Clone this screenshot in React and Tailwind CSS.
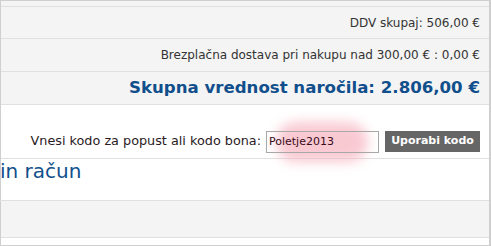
export default function App() {
  const font = { fontFamily: '"DejaVu Sans", Verdana, sans-serif' };
  return (
    <div className="w-[491px] h-[246px] bg-white overflow-hidden relative" style={font}>
      <div className="h-full border-l border-r-2 border-t border-b border-[#cfcfcf] flex flex-col">
        <div className="h-[6px] bg-[#f4f4f4] border-b border-[#e0e0e0]"></div>
        <div className="h-[32px] bg-[#f4f4f4] border-b border-[#e0e0e0] flex items-center justify-end pr-[9px] text-[12px] text-[#333]">
          DDV skupaj: 506,00 €
        </div>
        <div className="h-[33px] bg-[#f4f4f4] border-b border-[#e0e0e0] flex items-center justify-end pr-[9px] text-[12px] text-[#333]">
          Brezplačna dostava pri nakupu nad 300,00 € : 0,00 €
        </div>
        <div className="h-[33px] bg-[#f4f4f4] border-b border-[#e0e0e0] flex items-center justify-end pr-[9px] text-[16.6px] font-bold text-[#114f8c]">
          Skupna vrednost naročila: 2.806,00 €
        </div>
        <div className="h-[54px] border-b border-[#e0e0e0] flex items-end justify-end pr-[9px] pb-[5px] gap-[5px] text-[12.8px] text-[#2a1a24]">
          <span className="mb-[3px]">Vnesi kodo za popust ali kodo bona:</span>
          <div className="relative">
            <div className="absolute left-[10px] top-[-9px] w-[92px] h-[40px] rounded-full bg-[#f7b3c0] blur-[6px] opacity-70"></div>
            <div className="relative w-[113px] h-[22px] border border-[#a8a8a8] flex items-center px-[2px] text-[11px] text-[#3a0a1a]">
              Poletje2013
            </div>
          </div>
          <button className="ml-[1px] w-[95px] h-[21px] bg-[#666666] text-white font-bold text-[11px] flex items-center justify-center mb-[1px]">
            Uporabi kodo
          </button>
        </div>
        <div className="h-[42px] border-b border-[#e0e0e0] text-[20px] text-[#114f8c] leading-[24px] -ml-[1px]">
          in račun
        </div>
        <div className="h-[37px] bg-[#f4f4f4] border-b border-[#e0e0e0]"></div>
        <div className="flex-1"></div>
      </div>
    </div>
  );
}
